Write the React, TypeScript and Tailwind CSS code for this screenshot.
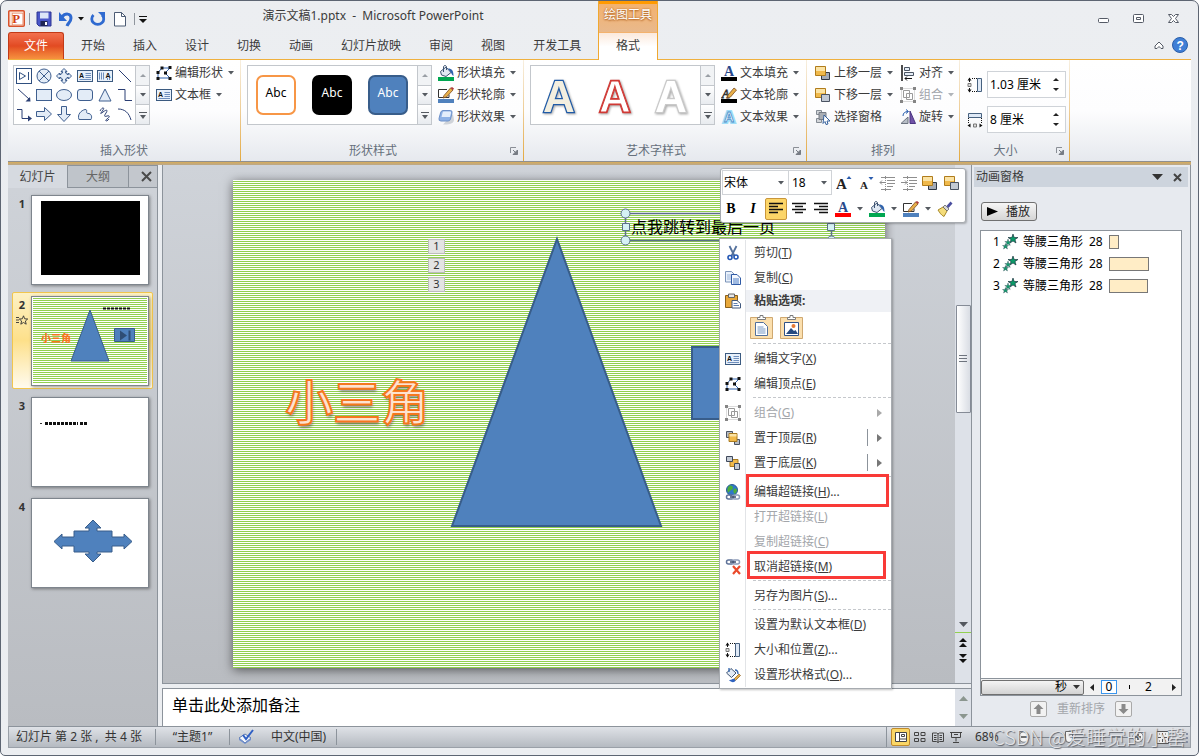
import type { ReactNode } from 'react'
import clsx from 'clsx'

type SvgProps = { children: ReactNode; size?: number }

const Icon = ({ children, size = 16 }: SvgProps) => (
  <svg width={size} height={size} viewBox="0 0 16 16" fill="none" className="shrink-0" aria-hidden="true">
    {children}
  </svg>
)

const Caret = ({ color = '#555a60' }: { color?: string }) => (
  <svg width="6" height="4" viewBox="0 0 6 4" className="shrink-0" aria-hidden="true">
    <path d="M0 0h6L3 3.5z" fill={color} />
  </svg>
)

const EditPoints = () => (
  <Icon>
    <path d="M2 13V7.5L6 3h8l-5 5 5 5z" stroke="#2f62b0" />
    <path d="M4.500 1.500h3v3h-3zM12.500 1h3v3h-3zM.5 6h3v3h-3zM.5 12h3v3h-3zM12.500 12h3v3h-3zM8 6.500h3v3H8z" fill="#111" />
  </Icon>
)

const TextBox = () => (
  <Icon>
    <rect x=".5" y="2.500" width="15" height="11" fill="#e8f0fa" stroke="#3b5a80" />
    <text x="2" y="9.500" fontSize="7" fontWeight="700" fill="#111" fontFamily="Liberation Sans">A</text>
    <path d="M8.500 5.500h5.500M8.500 7.500h5.500M8.500 9.500h5.500M2.500 11.500H14" stroke="#6f8fbd" />
  </Icon>
)

const VerticalTextBox = () => (
  <Icon>
    <rect x=".5" y="2.500" width="15" height="11" fill="#e8f0fa" stroke="#3b5a80" />
    <text x="8.500" y="9.500" fontSize="7" fontWeight="700" fill="#111" fontFamily="Liberation Sans">A</text>
    <path d="M2.500 4.500v7M4.500 4.500v7M6.500 4.500v7M10.500 10v2M12.500 10v2" stroke="#6f8fbd" />
  </Icon>
)

const Bucket = ({ bar = '#00a651' }: { bar?: string }) => (
  <Icon>
    <path d="M2.500 6.500L8 2l5 5.500-5 4-4.500-1.500z" fill="#dfe8f3" stroke="#3d5372" />
    <path d="M5.500 7V1.500C6 .3 8 .3 8.500 1.500V5" stroke="#3d5372" />
    <path d="M10 3.500c4 0 5.500 2 5.500 7.500-1.500-1-2-2.500-3-4z" fill="#2f63ad" />
    <path d="M0 12h16v4H0z" fill={bar} />
  </Icon>
)

const PenOutline = ({ bar = '#4f81bd' }: { bar?: string }) => (
  <Icon>
    <path d="M9 2.500H.5v8H11v-3" fill="#fff" stroke="#333" />
    <path d="M6 8.500L12.500 1l2.500 2-6.500 7L5 11z" fill="#e8b04a" stroke="#7b4d22" strokeWidth=".8" />
    <path d="M12.500 1L14 0l2 1.500L15 3z" fill="#b33a3a" />
    <path d="M0 12h16v4H0z" fill={bar} />
  </Icon>
)

const Effects = () => (
  <Icon>
    <path d="M5 15.500c5 .5 10.500-.5 11-4.500L15 5z" fill="#cfd3d9" />
    <path d="M5 1.500h7.500Q14.500 1.500 14 4l-1.500 6q-.5 2-2.500 2H3Q.5 12 1 9.500L2.500 4Q3 1.500 5 1.500z" fill="#8db1e6" stroke="#6d90c8" />
    <path d="M5.500 2.500H12q1.500 0 1 1.500l-1 4H3.500l1-4q.2-1.500 1-1.500z" fill="#e3edfb" />
  </Icon>
)

const LetterA = ({ bar }: { bar: string }) => (
  <Icon>
    <text x="3" y="11" fontSize="14" fontWeight="700" fill="#28498c" fontFamily="Liberation Serif">A</text>
    <path d="M0 12h16v4H0z" fill={bar} />
  </Icon>
)

const LetterOutline = () => (
  <Icon>
    <text x="1" y="11" fontSize="12" fontStyle="italic" fill="#fff" stroke="#333" strokeWidth=".8" fontFamily="Liberation Serif">A</text>
    <path d="M7 8l6-7 2.500 2L9.500 10 6.500 11z" fill="#e8b04a" stroke="#7b4d22" strokeWidth=".8" />
    <path d="M0 12h16v4H0z" fill="#000" />
  </Icon>
)

const LetterGlow = () => (
  <Icon>
    <text x="3" y="13" fontSize="14" fontWeight="700" fill="#fff" stroke="#9fdcf7" strokeWidth="4" paintOrder="stroke" fontFamily="Liberation Sans">A</text>
    <text x="3" y="13" fontSize="14" fontWeight="700" fill="#eef7ff" stroke="#4a8cc8" strokeWidth=".8" fontFamily="Liberation Sans">A</text>
  </Icon>
)

const BringForward = () => (
  <Icon>
    <path d="M6.500 7.500h8v7h-8z" fill="#a4abb6" stroke="#2f3743" />
    <path d="M.5 1.500h10v9H.5z" fill="#f0b94b" stroke="#b07c1c" />
    <path d="M1 2h9v4H1z" fill="#fbe3a4" />
  </Icon>
)

const SendBackward = () => (
  <Icon>
    <path d="M.5 1.500h10v9H.5z" fill="#f0b94b" stroke="#b07c1c" />
    <path d="M1 2h9v4H1z" fill="#fbe3a4" />
    <path d="M6.500 7.500h8v7h-8z" fill="#c3cad4" stroke="#4a5362" />
  </Icon>
)

const ToFront = () => (
  <Icon>
    <path d="M1.500 1.500h6v6h-6zM9.500 9.500h5v5h-5z" fill="#b6bcc5" stroke="#4a5362" />
    <path d="M4 3.500h8v8H4z" fill="#f0b94b" stroke="#a87a20" />
    <path d="M4.500 4h7v2.500h-7z" fill="#fbe3a4" />
  </Icon>
)

const ToBack = () => (
  <Icon>
    <path d="M5 4.500h8v7H5z" fill="#f0b94b" stroke="#a87a20" />
    <path d="M1.500 1.500h6v5h-6zM9.500 8.500h5v6h-5z" fill="#c3cad4" stroke="#3f495a" />
  </Icon>
)

const SelectionPane = () => (
  <Icon>
    <path d="M1.500 1.500h5v4h-5zM1.500 9.500h5v4h-5z" fill="#d3d6da" stroke="#858c95" />
    <path d="M4 3.500h7v7H4z" fill="#a9adb3" stroke="#777d86" />
    <path d="M9 6l6 6h-3l1 3-2 .500-1-3-2 2z" fill="#fff" stroke="#35609c" />
  </Icon>
)

const Align = () => (
  <Icon>
    <path d="M2 0v16" stroke="#111" strokeWidth="1.500" />
    <path d="M4.500 2.500h5v3h-5zM4.500 7.500h9v3h-9z" fill="#e4ecf6" stroke="#4b5563" />
    <path d="M12 13.500H5M7 11.500l-2 2 2 2" stroke="#111" />
  </Icon>
)

const GroupIcon = () => (
  <Icon>
    <path d="M1.500 1.500h13v13h-13z" stroke="#b9b9b9" strokeDasharray="1 1" />
    <path d="M3.500 3.500h6v7h-6zM6.500 6.500h6v6h-6z" stroke="#9a9a9a" />
    <path d="M0 0h3v3H0zM13 0h3v3h-3zM0 13h3v3H0zM13 13h3v3h-3z" fill="#858585" />
  </Icon>
)

const Rotate = () => (
  <Icon>
    <path d="M1 14.500L8 8v6.500z" fill="#b7bdc6" stroke="#6c7480" />
    <path d="M10 14.500V2l5.500 12.500z" fill="#7153a8" stroke="#4a3580" />
    <path d="M3 7c0-3 2-4.500 5-4.500M6 .5l2.500 2L6 4.500" stroke="#2a5fae" />
  </Icon>
)

const HeightIcon = () => (
  <Icon>
    <path d="M10.500 1.500h4v13h-4z" fill="#dfe9f6" stroke="#47617f" />
    <path d="M2.500 1v4M2.500 11v4" stroke="#111" />
    <path d="M.5 3.500l2-3 2 3zM.5 12.500l2 3 2-3z" fill="#111" />
    <path d="M5 1.500h5M5 14.500h5" stroke="#111" strokeDasharray="1 1" />
    <path d="M1 6.500h3v3H1z" fill="#ddd" stroke="#777" />
  </Icon>
)

const WidthIcon = () => (
  <Icon>
    <path d="M1.500 1.500h13v4h-13z" fill="#dfe9f6" stroke="#47617f" />
    <path d="M.5 13.500l3-2v4zM15.500 13.500l-3-2v4z" fill="#111" />
    <path d="M1.500 6v5M14.500 6v5" stroke="#111" strokeDasharray="1 1" />
    <path d="M6.500 12h3v3h-3z" fill="#ddd" stroke="#777" />
  </Icon>
)

const Cut = () => (
  <Icon>
    <path d="M4.500 1L9.500 11M11.500 1L6.500 11" stroke="#54719c" strokeWidth="1.800" />
    <circle cx="5" cy="12.500" r="2" stroke="#2458b5" strokeWidth="1.600" />
    <circle cx="11" cy="12" r="2" stroke="#2458b5" strokeWidth="1.600" />
  </Icon>
)

const Copy = () => (
  <Icon>
    <path d="M.5 1.500h6l2.500 2.500v8H.5z" fill="#e9f1fb" stroke="#7b93b8" />
    <path d="M2 5h5M2 7h5M2 9h5" stroke="#9db5d8" />
    <path d="M6.500 4.500h5.500L15.500 8v6.500h-9z" fill="#f4f8fe" stroke="#2f5aa5" />
    <path d="M8 9h6M8 11h6M8 13h6" stroke="#4d7cc4" />
  </Icon>
)

const Paste = () => (
  <Icon>
    <path d="M.5 2.500h12v12H.5z" fill="#e8a83a" stroke="#8a5f1a" />
    <path d="M3.500 1h6v3.500h-6z" fill="#e7e7e7" stroke="#666" />
    <path d="M7 7.500h5l3.500 3v4.500H7z" fill="#fff" stroke="#41597e" />
    <path d="M8.500 10.500h4M8.500 12.500h5.500" stroke="#5b7db0" />
  </Icon>
)

const Chain = ({ y = 0 }: { y?: number }) => (
  <g transform={`translate(0 ${y})`} strokeWidth="1.500">
    <rect x="1.500" y="3" width="7" height="4" rx="2" stroke="#5f7399" />
    <rect x="7.500" y="3" width="7" height="4" rx="2" stroke="#8c9bb8" />
    <path d="M5 5h6" stroke="#3d4d6d" />
  </g>
)

const GlobeLink = () => (
  <Icon>
    <circle cx="7" cy="6" r="5.500" fill="#2f78c9" stroke="#2a5c94" />
    <path d="M4 2c2-1 4 0 4 2S5 6 4 8 1 5 4 2zM9 5c2-1 3 0 3 2l-2 3C8 9 8 6 9 5z" fill="#4cae3c" />
    <Chain y={8} />
  </Icon>
)

const RemoveLink = () => (
  <Icon>
    <Chain y={-2} />
    <path d="M8 7l7 8M15 7l-7 8" stroke="#ea4a2b" strokeWidth="2.200" />
  </Icon>
)

const FormatShape = () => (
  <Icon>
    <path d="M1.500 6L6 1.500l5 4.500-4.500 4.500z" fill="#e2eaf4" stroke="#3d5372" />
    <path d="M4 5V1M10 3c2 0 3 1 3 4" stroke="#2f63ad" strokeWidth="1.300" />
    <path d="M9 12l5-5 1.500 1.500-5 5z" fill="#e6ae48" stroke="#8b5d20" strokeWidth=".7" />
    <path d="M4 13c3 .500 3-2 5.500-1l1 1.500C9.500 16 6 15.500 4 13z" fill="#2f63c0" />
  </Icon>
)

const PasteBlock = ({ picture }: { picture?: boolean }) => (
  <svg width="23" height="24" viewBox="0 0 23 24" fill="none" aria-hidden="true">
    <path d="M.5 2.500h22v21H.5z" fill="#fbdfae" stroke="#cfa870" />
    <path d="M7.500 4.500v-2h2.500V.5h3v2h2.500v2z" fill="#fff" stroke="#7c7c7c" />
    {picture ? (
      <>
        <path d="M4.500 7.500h14v13h-14z" fill="#fff" stroke="#2f5288" />
        <path d="M6 19l5-6 3 3 1.500-1 2.500 4z" fill="#264a80" />
        <circle cx="13.500" cy="11" r="2" fill="#e57a35" />
      </>
    ) : (
      <>
        <path d="M5.500 7.500h8l4 4v9h-12z" fill="#fff" stroke="#52709c" />
        <path d="M7.500 12h6M7.500 14h8M7.500 16h8M7.500 18h8" stroke="#7797c2" />
      </>
    )}
  </svg>
)

const Lines = ({ align }: { align: 'left' | 'center' | 'right' }) => {
  const d = {
    left: 'M1 2.500h14M1 5.500h9M1 8.500h14M1 11.500h9',
    center: 'M1 2.500h14M4 5.500h8M1 8.500h14M4 11.500h8',
    right: 'M1 2.500h14M6 5.500h9M1 8.500h14M6 11.500h9',
  }
  return (
    <Icon>
      <path d={d[align]} stroke="#111" strokeWidth="1.300" />
    </Icon>
  )
}

const Indent = ({ right }: { right?: boolean }) => (
  <Icon>
    <path d="M2 2.500h14M8 5.500h8M8 8.500h8M8 11.500h6M2 14.500h10" stroke="#8f8f8f" />
    <path d={right ? 'M0 7.500h6M4 5.500l2 2-2 2' : 'M7 7.500H1M3 5.500l-2 2 2 2'} stroke="#8c8c8c" />
    <path d="M6.500 1v15" stroke="#8f8f8f" strokeDasharray="1 1" />
  </Icon>
)

const s = { stroke: '#3f5f8f', fill: '#e3ecf7' }
const galleryShapes: [string, ReactNode][] = [
  ['动作按钮', <><rect x=".5" y=".5" width="15" height="15" fill="#fff" stroke="#2f4f7f" /><path d="M3.500 4.500v7l6-3.500zM12.500 4v8" stroke="#2f4f7f" /></>],
  ['汇总连接', <><circle cx="8" cy="8" r="7" {...s} /><path d="M3 3l10 10M13 3L3 13" stroke="#3f5f8f" /></>],
  ['十字箭头标注', <path d="M8 .5l3 3H9.500V5H11v1.500h1.500V5l3 3-3 3V9.500H11V11H9.500v1.500H11l-3 3-3-3h1.500V11H5V9.500H3.500V11l-3-3 3-3v1.500H5V5h1.500V3.500H5z" {...s} />],
  ['文本框', null],
  ['垂直文本框', null],
  ['直线', <path d="M2 2l12 12" stroke="#2b3f74" />],
  ['箭头', <><path d="M2 2l11 10" stroke="#2b3f74" /><path d="M14.500 14.500h-5l4.500-4.500z" fill="#2b3f74" /></>],
  ['矩形', <rect x=".5" y="2.500" width="15" height="11" {...s} />],
  ['椭圆', <ellipse cx="8" cy="8" rx="7.500" ry="5.500" {...s} />],
  ['圆角矩形', <rect x=".5" y="2.500" width="15" height="11" rx="2.500" {...s} />],
  ['等腰三角形', <path d="M8 2l6 12H2z" {...s} />],
  ['肘形连接符', <path d="M1 2.500h7v11h7" stroke="#2b3f74" />],
  ['肘形箭头', <><path d="M1 3.500h5v9h8" stroke="#2b3f74" /><path d="M12 9.500l4 3-4 3z" fill="#2b3f74" /></>],
  ['右箭头', <path d="M.5 5.500h8v-4L15.500 8l-7 6.500v-4h-8z" {...s} />],
  ['下箭头', <path d="M5.500 .5h5v8h4L8 15.500 1.500 8.500h4z" {...s} />],
  ['任意多边形', <path d="M2 13.500c-2-5 2-9 6-10 4 0-1 4 4 4 3 1 3 4 2 6z" {...s} />],
  ['自由曲线', <path d="M3 5c2-4 5-4 3-1S2 9 6 6s5-2 3 1-2 4 1 3 3 1 0 3 0 3 2 0" stroke="#2b3f74" />],
  ['弧形', <path d="M1 3c7 0 11 4 13 11" stroke="#2b3f74" />],
]

const GalleryScroll = ({ name }: { name: string }) => (
  <div className="flex w-[14px] shrink-0 flex-col divide-y divide-[#c3c7cc] border-l border-[#c3c7cc]">
    <button aria-label={`${name} 向上`} className="flex flex-1 items-center justify-center bg-[#f1f3f5]">
      <svg width="6" height="3"><path d="M0 3h6L3 0z" fill="#9a9fa5" /></svg>
    </button>
    <button aria-label={`${name} 向下`} className="flex flex-1 items-center justify-center bg-linear-to-b from-white to-[#e8ebef]">
      <Caret />
    </button>
    <button aria-label={`${name} 更多`} className="flex flex-1 items-center justify-center bg-linear-to-b from-white to-[#e8ebef]">
      <svg width="8" height="8"><path d="M0 1.500h8" stroke="#555a60" /><path d="M1 4h6L4 8z" fill="#555a60" /></svg>
    </button>
  </div>
)

type RibbonButtonProps = { icon: ReactNode; label: string; caret?: boolean; disabled?: boolean }

const RibbonButton = ({ icon, label, caret = true, disabled }: RibbonButtonProps) => (
  <button disabled={disabled} className={clsx('flex h-[22px] items-center gap-[3px]', disabled ? 'text-[#a0a4aa]' : 'text-[#3b3b3b]')}>
    {icon}
    <span className="mr-[2px] whitespace-nowrap">{label}</span>
    {caret && <Caret color={disabled ? '#b0b4b9' : undefined} />}
  </button>
)

type RibbonGroupProps = { label: string; width: string; launcher?: boolean; children: ReactNode }

const RibbonGroup = ({ label, width, launcher, children }: RibbonGroupProps) => (
  <section aria-label={label} className={clsx('flex shrink-0', width)}>
    <div className="flex min-w-0 flex-1 flex-col">
      <div className="flex flex-1 items-start pl-[5px] pt-[2px]">{children}</div>
      <div className="flex h-[20px] items-center text-[#66707c]">
        <span className="flex-1 text-center">{label}</span>
        {launcher && (
          <button aria-label={`${label}选项`} className="flex w-[18px] justify-center">
            <svg width="8" height="8" fill="none"><path d="M.5 6V.5H6" stroke="#8a8f96" /><path d="M3 3l3 3M7.500 3v4.500H3z" stroke="#777c84" fill="#777c84" /></svg>
          </button>
        )}
      </div>
    </div>
    <div className="w-px bg-linear-to-b from-[#f7efe0] to-[#e3a93c]" />
  </section>
)

const InsertGallery = () => (
  <div className="mr-[6px] mt-[3px] flex h-[60px] border border-[#c3c7cc] bg-white">
    <div className="grid w-[121px] grid-cols-6 justify-items-center">
      {galleryShapes.map(([name, shape]) => (
        <button key={name} aria-label={name} className="flex items-center">
          {name === '文本框' ? <TextBox /> : name === '垂直文本框' ? <VerticalTextBox /> : <Icon>{shape}</Icon>}
        </button>
      ))}
    </div>
    <GalleryScroll name="形状" />
  </div>
)

const wordArt = [
  { fill: '#f3efe0', stroke: '#1f5aa6', inner: '#f3efe0' },
  { fill: '#fff', stroke: '#d03a36', inner: '#d03a36' },
  { fill: '#fff', stroke: '#c9c9c9', inner: '#fff' },
]

const WordArtLetter = ({ fill, stroke, inner }: (typeof wordArt)[number]) => (
  <svg width="40" height="54" viewBox="0 0 40 54" className="drop-shadow-[1px_1px_1px_rgba(0,0,0,0.35)]" aria-hidden="true">
    <text x="20" y="44" textAnchor="middle" fontSize="44" fontWeight="700" fontFamily="Liberation Sans" fill={fill} stroke={stroke} strokeWidth="2.500" paintOrder="stroke">A</text>
    {inner !== fill && (
      <text x="20" y="44" textAnchor="middle" fontSize="44" fontWeight="700" fontFamily="Liberation Sans" fill="none" stroke={inner} strokeWidth="1">A</text>
    )}
  </svg>
)

const SizeField = ({ id, label, icon, value }: { id: string; label: string; icon: ReactNode; value: string }) => (
  <div className="flex items-center gap-1">
    <label htmlFor={id} aria-label={label}>{icon}</label>
    <div className="flex h-[27px] w-[79px] items-center border border-[#cfd3d8] bg-white pr-1">
      <input id={id} defaultValue={value} className="w-0 flex-1 bg-transparent px-[2px] text-black outline-none" />
      <div className="flex flex-col gap-[7px] px-[2px]">
        <button aria-label={`增加${label}`}><svg width="6" height="3" className="block"><path d="M0 3h6L3 0z" fill="#222" /></svg></button>
        <button aria-label={`减少${label}`}><svg width="6" height="3" className="block"><path d="M0 0h6L3 3z" fill="#222" /></svg></button>
      </div>
    </div>
  </div>
)

const QuickAccess = () => (
  <div className="flex w-[140px] items-center pt-1">
    <button aria-label="PowerPoint">
      <Icon size={17}>
        <rect x=".7" y=".7" width="14.600" height="14.600" rx="1" fill="#fbe3d6" stroke="#d9532c" strokeWidth="1.400" />
        <rect x="4" y="3" width="10" height="11" fill="#fff" stroke="#e88a68" strokeWidth=".7" />
        <text x="4" y="12.500" fontSize="12" fontWeight="700" fill="#cf3f16" fontFamily="Liberation Serif">P</text>
      </Icon>
    </button>
    <span className="ml-1 h-3 w-px shrink-0 bg-[#8f959d]" />
    <button aria-label="保存" className="ml-1.5">
      <Icon>
        <path d="M1 1h14v14H3l-2-2z" fill="#4a57c9" stroke="#2c3592" />
        <path d="M4 1.500h8.500v6H4z" fill="#dce6f8" />
        <path d="M4.500 10h7v5h-7z" fill="#1e2555" /><path d="M9 11h2v3H9z" fill="#fff" />
      </Icon>
    </button>
    <button aria-label="撤消" className="ml-1.5">
      <Icon><path d="M4 6c3-4 9-4 9 1 0 4-3 5-4 8" stroke="#2f6ad0" strokeWidth="3" /><path d="M1 1v9h8z" fill="#2f6ad0" /></Icon>
    </button>
    <button aria-label="撤消选项" className="ml-1"><Caret color="#111" /></button>
    <button aria-label="恢复" className="ml-1.5">
      <Icon><path d="M3.500 4a6 5.500 0 1 0 8.500 0" stroke="#2f6ad0" strokeWidth="2.800" /><path d="M8 1h7v7z" fill="#2f6ad0" /></Icon>
    </button>
    <button aria-label="新建" className="ml-1.5">
      <Icon><path d="M2.500 1.500h7l4 4v9.500h-11z" fill="#fff" stroke="#4d5c75" /><path d="M9.500 1.500v4h4" stroke="#4d5c75" /></Icon>
    </button>
    <span className="ml-1.5 h-3 w-px shrink-0 bg-[#8f959d]" />
    <button aria-label="自定义快速访问工具栏" className="ml-1">
      <svg width="8" height="8"><path d="M0 1.500h8" stroke="#111" /><path d="M0 4h8L4 8z" fill="#111" /></svg>
    </button>
  </div>
)

const tabs = ['开始', '插入', '设计', '切换', '动画', '幻灯片放映', '审阅', '视图', '开发工具']

const Header = () => (
  <header className="flex h-[59px] shrink-0">
    <div className="flex w-[590px] flex-col border-b border-[#efb03e]">
      <div className="flex h-[31px]">
        <QuickAccess />
        <h1 className="flex-1 pt-[6px] text-center text-[12px] leading-[18px] text-[#3b3b3b]">演示文稿1.pptx&nbsp; - &nbsp;Microsoft PowerPoint</h1>
      </div>
      <nav className="flex flex-1 items-stretch text-[#3b3b3b]">
        <button className="mr-[3px] w-[56px] rounded-t-[3px] border border-b-0 border-[#c23a17] bg-linear-to-b from-[#f2704d] via-[#e24a22] to-[#f6913f] text-white">文件</button>
        {tabs.map(tab => <button key={tab} className="px-[14px]">{tab}</button>)}
      </nav>
    </div>
    <div className="flex w-[60px] flex-col border-x border-[#f0a830]">
      <div className="flex h-[31px] justify-center border-t-[3px] border-[#ff9a00] bg-linear-to-b from-[#f3b26e] to-[#e9b98c] pt-[2px] leading-[18px] text-white [text-shadow:0_0_2px_#b0601c,0_1px_2px_#b0601c]">绘图工具</div>
      <button className="flex-1 border-t border-[#f3b26e] bg-linear-to-b from-[#fbe9dc] via-white to-white pb-px text-[#3b3b3b]">格式</button>
    </div>
    <div className="flex flex-1 flex-col items-end border-b border-[#efb03e]">
      <div className="flex gap-[23px] pr-[11px] pt-[10px]">
        <button aria-label="最小化"><svg width="12" height="14" fill="none"><rect x=".5" y="7.500" width="10" height="4" rx="1" fill="#fff" stroke="#555b66" /></svg></button>
        <button aria-label="还原"><svg width="12" height="14" fill="none"><rect x=".5" y="3.500" width="10" height="8" rx="1" fill="#fff" stroke="#555b66" /><path d="M3.500 6.500h4v2h-4z" stroke="#555b66" /></svg></button>
        <button aria-label="关闭"><svg width="12" height="14" fill="none"><path d="M.5 3.500h3l2 2 2-2h3L7.500 7.500l3 4h-3l-2-2-2 2h-3l3-4z" fill="#fff" stroke="#555b66" /></svg></button>
      </div>
      <div className="flex items-center gap-2 pr-[3px] pt-3">
        <button aria-label="功能区最小化"><svg width="10" height="9" fill="none"><path d="M1 5l4-4 4 4v2.500H7L5 5.500 3 7.500H1z" fill="#fff" stroke="#555b66" /></svg></button>
        <button aria-label="帮助">
          <Icon><circle cx="8" cy="8" r="7.500" fill="#3f7fd6" stroke="#2a5ea8" /><text x="4.500" y="12.500" fontSize="12" fontWeight="700" fill="#fff" fontFamily="Liberation Sans">?</text></Icon>
        </button>
      </div>
    </div>
  </header>
)

const Ribbon = () => (
  <div className="flex h-[101px] shrink-0 bg-linear-to-b from-white via-[#fdfdfe] to-[#e6e9ee]">
    <RibbonGroup label="插入形状" width="w-[233px]">
      <InsertGallery />
      <div className="flex flex-col">
        <RibbonButton icon={<EditPoints />} label="编辑形状" />
        <RibbonButton icon={<TextBox />} label="文本框" />
      </div>
    </RibbonGroup>
    <RibbonGroup label="形状样式" width="w-[283px]" launcher>
      <div className="ml-px mr-[6px] mt-[3px] flex h-[60px] w-[185px] border border-[#c3c7cc] bg-white">
        <div className="flex flex-1 items-center gap-4 pl-[8px] leading-4">
          <button className="h-10 w-10 rounded-[7px] border-2 border-[#f79646] bg-white pb-1 text-black">Abc</button>
          <button className="h-10 w-10 rounded-[7px] bg-black pb-1 text-white">Abc</button>
          <button className="h-10 w-10 rounded-[7px] border-2 border-[#385d8a] bg-[#4f81bd] pb-1 text-white">Abc</button>
        </div>
        <GalleryScroll name="形状样式" />
      </div>
      <div className="flex flex-col">
        <RibbonButton icon={<Bucket />} label="形状填充" />
        <RibbonButton icon={<PenOutline />} label="形状轮廓" />
        <RibbonButton icon={<Effects />} label="形状效果" />
      </div>
    </RibbonGroup>
    <RibbonGroup label="艺术字样式" width="w-[283px]" launcher>
      <div className="ml-px mr-[6px] mt-[3px] flex h-[60px] w-[185px] border border-[#c3c7cc] bg-white">
        <div className="flex flex-1 items-center gap-4 pl-[8px]">
          {wordArt.map(style => (
            <button key={style.stroke} aria-label="艺术字"><WordArtLetter {...style} /></button>
          ))}
        </div>
        <GalleryScroll name="艺术字样式" />
      </div>
      <div className="flex flex-col">
        <RibbonButton icon={<LetterA bar="#000" />} label="文本填充" />
        <RibbonButton icon={<LetterOutline />} label="文本轮廓" />
        <RibbonButton icon={<LetterGlow />} label="文本效果" />
      </div>
    </RibbonGroup>
    <RibbonGroup label="排列" width="w-[153px]">
      <div className="ml-[3px] mr-[7px] flex flex-col">
        <RibbonButton icon={<BringForward />} label="上移一层" />
        <RibbonButton icon={<SendBackward />} label="下移一层" />
        <RibbonButton icon={<SelectionPane />} label="选择窗格" caret={false} />
      </div>
      <div className="flex flex-col">
        <RibbonButton icon={<Align />} label="对齐" />
        <RibbonButton icon={<GroupIcon />} label="组合" disabled />
        <RibbonButton icon={<Rotate />} label="旋转" />
      </div>
    </RibbonGroup>
    <RibbonGroup label="大小" width="w-[110px]" launcher>
      <div className="flex flex-col gap-2 pl-[2px] pt-[9px]">
        <SizeField id="shape-height" label="高度" icon={<HeightIcon />} value="1.03 厘米" />
        <SizeField id="shape-width" label="宽度" icon={<WidthIcon />} value="8 厘米" />
      </div>
    </RibbonGroup>
  </div>
)

const thumbs: ReactNode[] = [
  <svg viewBox="0 0 116 88" className="block size-full bg-white"><path d="M9 5h99v74H9z" fill="#000" /></svg>,
  <div className="size-full border border-white bg-[repeating-linear-gradient(to_bottom,#92d050_0,#92d050_1px,#fff_1px,#fff_2px)]">
    <svg viewBox="0 0 114 86" className="block size-full">
      <path d="M57 12l19 51H38z" fill="#4f81bd" stroke="#385d8a" />
      <path d="M81.500 30.500h20v13h-20z" fill="#4f81bd" stroke="#385d8a" />
      <path d="M87 32.500v10l7-5zM95.500 32.500h2v10h-2z" fill="#2f4d74" />
      <path d="M70 10.500h27" stroke="#111" strokeWidth="2" strokeDasharray="3 1" />
      <text x="8" y="44" fontSize="10" fontWeight="900" fill="#f5781e" fontFamily="Noto Sans CJK SC">小三角</text>
    </svg>
  </div>,
  <svg viewBox="0 0 116 88" className="block size-full bg-white">
    <path d="M8 25.500h2" stroke="#333" />
    <path d="M13 25.500h33M48 25.500h7" stroke="#111" strokeWidth="3" strokeDasharray="3 1" />
  </svg>,
  <svg viewBox="0 0 116 88" className="block size-full bg-white">
    <path d="M61 21l8 8h-4v3h15v6h12v-3l8 7.500-8 7.500v-3H80v6H65v2h4l-8 8-8-8h4v-2H42v-6H30v3l-8-7.500 8-7.500v3h12v-6h15v-3h-4z" fill="#4f81bd" stroke="#385d8a" />
  </svg>,
]

const SlidePanel = () => (
  <aside className="flex w-[150px] shrink-0 flex-col border-r border-[#8c939b] bg-linear-to-b from-[#cfd3d9] to-[#b9bcc1]">
    <div className="flex h-[23px] text-[#444]">
      <button className="w-[59px] bg-[#d6dae0]">幻灯片</button>
      <button className="w-[61px] border border-r-0 border-[#8c939b] bg-[#bfc4ca] text-[#666]">大纲</button>
      <button aria-label="关闭窗格" className="flex flex-1 items-center justify-center border border-r-0 border-[#8c939b] bg-[#c3c7cd] pl-[6px]">
        <svg width="11" height="11"><path d="M1 1l9 9M10 1l-9 9" stroke="#4a4a4a" strokeWidth="2" /></svg>
      </button>
    </div>
    <ol className="flex flex-col gap-1 px-[4px] pt-[3px]">
      {thumbs.map((thumb, i) => (
        <li
          key={i}
          className={clsx(
            'flex h-[97px] rounded-[2px] border py-[3px] pl-px',
            i === 1 ? 'border-[#f2c64d] bg-linear-to-b from-[#fdf1c4] via-[#fde08a] to-[#fffbee]' : 'border-transparent',
          )}
        >
          <div className="flex w-[17px] flex-col items-center gap-1 pr-px pt-[3px] text-[11px] leading-3 text-[#333]">
            <b>{i + 1}</b>
            {i === 1 && (
              <svg width="12" height="11" fill="none"><path d="M7.500 .8l1.200 3 3 .200-2.300 2 .800 3.200-2.700-1.700L4.800 9.200l.800-3.200-2.300-2 3-.200zM0 2.500h3M0 5h3M0 7.500h3" stroke="#333" strokeWidth=".9" /></svg>
            )}
          </div>
          <div className="h-[90px] w-[118px] border border-[#7e858d] shadow-[1px_1px_3px_rgba(0,0,0,0.4)]">{thumb}</div>
        </li>
      ))}
    </ol>
  </aside>
)

const Slide = () => (
  <div className="relative size-full bg-[repeating-linear-gradient(to_bottom,#fff_0,#fff_1px,#92d050_1px,#92d050_2px)] shadow-[0_2px_10px_rgba(0,0,0,0.55)]">
    <svg width="640" height="360" fill="none" className="absolute left-0 top-0" aria-hidden="true">
      <path d="M324 59l104 287H219z" fill="#4f81bd" stroke="#385d8a" strokeWidth="2" />
      <path d="M459 167h100v72H459z" fill="#4f81bd" stroke="#385d8a" strokeWidth="2" />
      <path d="M392.500 33.500h206v27h-206z" stroke="#5b7089" strokeWidth="1.500" />
      <g fill="#d5f1f4" stroke="#5b7089">
        <circle cx="392.500" cy="33.500" r="4.500" />
        <circle cx="392.500" cy="60.500" r="4.500" />
        <circle cx="598.500" cy="60.500" r="4.500" />
        <path d="M389.500 43.500h7v7h-7zM594.500 43.500h7v7h-7z" />
      </g>
    </svg>
    <p className="absolute left-[398px] top-[35px] whitespace-nowrap text-[16px] leading-6 text-black">点我跳转到最后一页</p>
    <p className="absolute left-[52px] top-[187px] whitespace-nowrap font-['Noto_Sans_CJK_SC',sans-serif] text-[48px] leading-[64px] font-medium text-[#fde3d0] [-webkit-text-stroke:2px_#f5781e] [text-shadow:1px_3px_3px_rgba(80,80,80,0.6)]">小三角</p>
    <ol className="absolute left-[195px] top-[59px] flex flex-col gap-1 text-[11px] leading-[12px] text-[#333]">
      {[1, 2, 3].map(n => (
        <li key={n} className="h-[15px] w-[17px] border border-[#bdbdbd] bg-[#e4e4e4] text-center">{n}</li>
      ))}
    </ol>
  </div>
)

const Workspace = () => (
  <main className="ml-[4px] flex min-w-0 flex-1 flex-col">
    <div className="flex min-h-0 flex-1 border-b border-l border-[#8c939b]">
      <div className="flex-1 bg-linear-to-b from-[#cfd3d9] to-[#b9bcc1] px-[70px] py-[15px]">
        <Slide />
      </div>
      <div className="flex w-[16px] flex-col items-center bg-[#dde1e8]">
        <div className="flex-1" />
        <div className="flex h-[108px] w-[15px] items-center justify-center rounded-[1px] border border-[#858b96] bg-linear-to-r from-white to-[#d9dde4]">
          <svg width="8" height="8"><path d="M0 .5h8M0 3.500h8M0 6.500h8" stroke="#6e747e" /></svg>
        </div>
        <div className="h-[209px]" />
        <button aria-label="向下滚动"><svg width="9" height="5" className="block"><path d="M0 0h9L4.500 5z" fill="#54585f" /></svg></button>
        <div className="mt-[5px] h-px w-full shrink-0 bg-[#92d050]" />
        <button aria-label="上一张幻灯片" className="mt-[5px]"><svg width="8" height="10" className="block"><path d="M0 4h8L4 0zM0 9h8L4 5z" fill="#111" /></svg></button>
        <button aria-label="下一张幻灯片" className="mb-[19px] mt-[6px]"><svg width="8" height="10" className="block"><path d="M0 0h8L4 4zM0 5h8L4 9z" fill="#111" /></svg></button>
      </div>
    </div>
    <div className="mt-[4px] flex h-[38px] border-l border-t border-[#8c939b] bg-white">
      <textarea aria-label="备注" defaultValue="单击此处添加备注" className="flex-1 resize-none overflow-hidden px-[9px] pt-[4px] text-[16px] leading-6 text-black outline-none" />
      <div className="flex w-[16px] flex-col items-center justify-between bg-[#dde1e8] py-[7px]">
        <svg width="9" height="5"><path d="M0 5h9L4.500 0z" fill="#8b968f" /></svg>
        <svg width="9" height="5"><path d="M0 0h9L4.500 5z" fill="#8b968f" /></svg>
      </div>
    </div>
  </main>
)

const effects = [
  { id: 1, bar: 10 },
  { id: 2, bar: 40 },
  { id: 3, bar: 39 },
]

const StarIcon = () => (
  <Icon>
    <path d="M11 0l1.200 3.500H16l-3 2 1 3.500-3-2-3 2 1-3.500-3-2h3.800z" fill="#0c9a68" stroke="#123" strokeWidth=".6" />
    <path d="M6 5l.800 2.500h2.600l-2 1.500.800 2.500L6 10l-2 1.500.800-2.500-2-1.500h2.400zM3.500 9.500l.700 2H6.500l-1.700 1.300.700 2.200-2-1.300-2 1.300.700-2.200L.5 11.500h2.300z" fill="#129a6c" stroke="#456" strokeWidth=".4" />
  </Icon>
)

const AnimationPane = () => (
  <aside className="flex w-[220px] shrink-0 flex-col border-x border-[#8c939b] bg-[#e7eaef] px-[2px] pt-[2px]">
    <div className="flex h-[20px] items-center bg-[#cdd4dd] px-[2px] text-[#3b3b3b]">
      <h2 className="flex-1 text-[12px]">动画窗格</h2>
      <button aria-label="窗格选项" className="mr-[10px]"><svg width="11" height="6" className="block"><path d="M0 0h11L5.500 6z" fill="#333" /></svg></button>
      <button aria-label="关闭动画窗格" className="mr-[4px]"><svg width="9" height="9" className="block"><path d="M1 1l7 7M8 1L1 8" stroke="#444" strokeWidth="2" /></svg></button>
    </div>
    <button className="ml-[7px] mt-[15px] flex h-[19px] w-[56px] items-center justify-between rounded-[3px] border border-[#707070] bg-linear-to-b from-[#f6f6f6] to-[#d5d5d5] pl-[5px] pr-[6px] text-[#222]">
      <svg width="11" height="9"><path d="M0 0l11 4.500L0 9z" fill="#000" /></svg>
      播放
    </button>
    <div className="ml-[6px] mr-[6px] mt-[9px] flex min-h-0 flex-1 flex-col border border-[#8c939b] bg-white">
      <ol className="flex-1 text-black">
        {effects.map(effect => (
          <li key={effect.id} className="flex h-[22px] items-center pl-[12px]">
            <span className="w-[9px]">{effect.id}</span>
            <StarIcon />
            <span className="ml-[5px] w-[66px]">等腰三角形</span>
            <span className="w-[20px]">28</span>
            <span className="h-[14px] border border-[#777] bg-[#ffedc6]" style={{ width: effect.bar }} />
          </li>
        ))}
      </ol>
      <div className="flex h-[17px] items-center border-t border-[#8c939b] bg-[#f2f2f2] text-black">
        <button className="flex h-[15px] w-[103px] items-center justify-end gap-[6px] rounded-[2px] border border-[#707070] bg-linear-to-b from-[#f4f4f4] to-[#d3d3d3] pr-[3px]">
          秒
          <svg width="7" height="4"><path d="M0 0h7L3.500 4z" fill="#333" /></svg>
        </button>
        <button aria-label="向左" className="ml-[6px]"><svg width="4" height="7" className="block"><path d="M4 0v7L0 3.500z" fill="#222" /></svg></button>
        <span className="ml-[7px] h-[14px] w-[16px] border border-[#3a96ee] bg-white text-center leading-[12px]">0</span>
        <span className="ml-[12px] h-[4px] w-px bg-black" />
        <span className="ml-[15px]">2</span>
        <button aria-label="向右" className="ml-auto mr-[5px]"><svg width="4" height="7" className="block"><path d="M0 0v7l4-3.500z" fill="#222" /></svg></button>
      </div>
    </div>
    <div className="flex h-[30px] items-center justify-center gap-[10px] pb-[5px] text-[#a3a6ab]">
      <button disabled aria-label="上移" className="flex h-[16px] w-[17px] items-center justify-center rounded-[2px] border border-[#a9a9a9] bg-[#f2f2f2]">
        <svg width="11" height="10"><path d="M5.500 0l5 5H7.500v5h-4V5H.5z" fill="#8a8a8a" /></svg>
      </button>
      重新排序
      <button disabled aria-label="下移" className="flex h-[16px] w-[17px] items-center justify-center rounded-[2px] border border-[#a9a9a9] bg-[#f2f2f2]">
        <svg width="11" height="10"><path d="M5.500 10l5-5H7.500V0h-4v5H.5z" fill="#8a8a8a" /></svg>
      </button>
    </div>
  </aside>
)

const StatusBar = () => (
  <footer className="flex h-[22px] shrink-0 items-center border border-t-[#8c939b] border-[#9aa0a8] bg-linear-to-b from-[#dfe2e7] to-[#b5bac1] text-[#333]">
    <span className="w-[147px] whitespace-pre border-r border-[#8c939b] pl-[7px]">幻灯片 第 2 张 ,  共 4 张</span>
    <span className="w-[74px] border-r border-[#8c939b] text-center">“主题1”</span>
    <div className="flex w-[107px] items-center gap-[17px] border-r border-[#8c939b] pl-[8px]">
      <Icon>
        <path d="M1 9l6-4 6 4-6 5z" fill="#f4f7fc" stroke="#5c79ae" /><path d="M1 9v2l6 4 6-4V9l-6 5z" fill="#6f8fd0" />
        <path d="M5 6l3 4 7-9" stroke="#2f5fc4" strokeWidth="2" />
      </Icon>
      <button>中文(中国)</button>
    </div>
    <div className="ml-auto flex items-center">
      <span className="mr-[4px] h-[20px] w-px bg-[#8c939b]" />
      <button aria-label="普通视图" className="flex h-[18px] w-[19px] items-center justify-center rounded-[2px] border border-[#c08a2c] bg-[#fbd766]">
        <svg width="12" height="10" fill="none"><path d="M.5 .5h11v9H.5z" fill="#fff" stroke="#444" /><path d="M4.500 .5v9M6.500 2.500h3v2h-3zM4.500 7h7" stroke="#444" /></svg>
      </button>
      <button aria-label="幻灯片浏览" className="ml-[4px]"><svg width="12" height="10" fill="none" className="block"><path d="M.5 .5h4v3h-4zM7 .5h4v3H7zM.5 6.500h4v3h-4zM7 6.500h4v3H7z" stroke="#444" /></svg></button>
      <button aria-label="阅读视图" className="ml-[6px]"><svg width="12" height="11" fill="none" className="block"><path d="M6 1.500v9M.5 1h4L6 2l1.500-1h4v8.500h-4L6 10.500 4.500 9.500h-4zM2 3.500h2.500M2 5.500h2.500M2 7.500h2.500M7.500 3.500H10M7.500 5.500H10M7.500 7.500H10" stroke="#444" /></svg></button>
      <button aria-label="幻灯片放映" className="ml-[6px]"><svg width="12" height="11" fill="none" className="block"><path d="M0 .5h12M1.500 .5v5h9v-5M6 5.500v4M3 10.500h6M4 2.500h4" stroke="#444" /></svg></button>
      <button className="ml-[13px] w-[43px] text-left">68%</button>
      <button aria-label="缩小"><Icon size={12}><circle cx="8" cy="8" r="7" fill="#f4f4f4" stroke="#666" /><path d="M4 8h8" stroke="#444" strokeWidth="2" /></Icon></button>
      <input
        type="range"
        aria-label="显示比例"
        min={10}
        max={400}
        defaultValue={150}
        className="mx-[3px] h-px w-[96px] appearance-none bg-[#7d838b] [&::-webkit-slider-thumb]:h-[12px] [&::-webkit-slider-thumb]:w-[8px] [&::-webkit-slider-thumb]:appearance-none [&::-webkit-slider-thumb]:rounded-b-[4px] [&::-webkit-slider-thumb]:border [&::-webkit-slider-thumb]:border-[#666] [&::-webkit-slider-thumb]:bg-[#f4f4f4]"
      />
      <button aria-label="放大"><Icon size={12}><circle cx="8" cy="8" r="7" fill="#f4f4f4" stroke="#666" /><path d="M4 8h8M8 4v8" stroke="#444" strokeWidth="2" /></Icon></button>
      <button aria-label="适应窗口" className="ml-[12px] mr-[8px]"><svg width="13" height="13" fill="none" className="block"><path d="M.5 .5h12v12H.5z" fill="#f1f1f1" stroke="#555" /><path d="M6.500 2v3M6.500 8v3M2 6.500h3M8 6.500h3M3 3h1M9 3h1M3 10h1M9 10h1" stroke="#555" /></svg></button>
      <svg width="12" height="12" className="mr-px mt-1" aria-hidden="true"><path d="M9 0h2v2H9zM5 4h2v2H5zM9 4h2v2H9zM1 8h2v2H1zM5 8h2v2H5zM9 8h2v2H9z" fill="#8790a5" /></svg>
    </div>
  </footer>
)

const MiniToolbar = () => (
  <div role="toolbar" aria-label="浮动工具栏" className="absolute left-[720px] top-[168px] flex h-[55px] w-[246px] flex-col rounded-[3px] border border-[#a7abb0] bg-white px-px pt-px shadow-[1px_1px_2px_rgba(0,0,0,0.25)]">
    <div className="flex h-[25px] items-center">
      <div className="flex h-[25px] w-[67px] items-center border border-[#d0d3d7] pr-1">
        <select aria-label="字体" className="w-0 flex-1 appearance-none bg-transparent pl-[1px] text-[12px] text-black outline-none"><option>宋体</option></select>
        <Caret />
      </div>
      <div className="flex h-[25px] w-[43px] items-center border border-l-0 border-[#d0d3d7] pr-1">
        <select aria-label="字号" className="w-0 flex-1 appearance-none bg-transparent pl-[3px] text-[12px] text-black outline-none"><option>18</option></select>
        <Caret />
      </div>
      <div className="flex flex-1 items-center justify-between pl-[4px] pr-[4px]">
        <button aria-label="增大字号"><Icon><text x="0" y="14" fontSize="15" fontWeight="700" fill="#222" fontFamily="Liberation Serif">A</text><path d="M10.500 4l2.500-3 2.500 3z" fill="#2a5cae" /></Icon></button>
        <button aria-label="减小字号"><Icon><text x="2" y="14" fontSize="11" fontWeight="700" fill="#222" fontFamily="Liberation Serif">A</text><path d="M10.500 2l2.500 3 2.500-3z" fill="#2a5cae" /></Icon></button>
        <button aria-label="减少缩进"><Indent /></button>
        <button aria-label="增加缩进"><Indent right /></button>
        <button aria-label="上移一层"><BringForward /></button>
        <button aria-label="下移一层"><SendBackward /></button>
      </div>
    </div>
    <div className="flex flex-1 items-center pl-px pt-px text-black">
      <button aria-label="加粗" className="w-[16px] font-['Liberation_Serif',serif] text-[14px] font-bold">B</button>
      <button aria-label="倾斜" className="ml-[6px] w-[16px] font-['Liberation_Serif',serif] text-[14px] font-bold italic">I</button>
      <button aria-label="左对齐" className="ml-[4px] flex h-[22px] w-[22px] items-center justify-center rounded-[2px] border border-[#c9963a] bg-[#fcd568]"><Lines align="left" /></button>
      <button aria-label="居中" className="ml-[4px]"><Lines align="center" /></button>
      <button aria-label="右对齐" className="ml-[6px]"><Lines align="right" /></button>
      <button aria-label="字体颜色" className="ml-[6px] flex items-center gap-[6px]"><LetterA bar="#f00" /><Caret /></button>
      <button aria-label="形状填充" className="ml-[6px] flex items-center gap-[6px]"><Bucket /><Caret /></button>
      <button aria-label="形状轮廓" className="ml-[6px] flex items-center gap-[6px]"><PenOutline /><Caret /></button>
      <button aria-label="格式刷" className="ml-[6px]">
        <Icon><path d="M1 9l5-3 4 4-3 5.500C4 14 3 12 1 9z" fill="#f4dc7a" stroke="#a88a2a" /><path d="M6 6l2-2 4 4-2 2z" fill="#d8d8d8" stroke="#555" strokeWidth=".7" /><path d="M9.500 5l4-4.500 2 2L11.500 7z" fill="#4a4e9f" /></Icon>
      </button>
    </div>
  </div>
)

type MenuEntry = {
  text: string
  hotkey: string
  icon?: ReactNode
  more?: boolean
  disabled?: boolean
  submenu?: 'plain' | 'split'
}

const menu: (MenuEntry | 'separator' | 'paste')[] = [
  { text: '剪切', hotkey: 'T', icon: <Cut /> },
  { text: '复制', hotkey: 'C', icon: <Copy /> },
  'paste',
  'separator',
  { text: '编辑文字', hotkey: 'X', icon: <TextBox /> },
  { text: '编辑顶点', hotkey: 'E', icon: <EditPoints /> },
  'separator',
  { text: '组合', hotkey: 'G', icon: <GroupIcon />, disabled: true, submenu: 'plain' },
  { text: '置于顶层', hotkey: 'R', icon: <ToFront />, submenu: 'split' },
  { text: '置于底层', hotkey: 'K', icon: <ToBack />, submenu: 'split' },
  'separator',
  { text: '编辑超链接', hotkey: 'H', icon: <GlobeLink />, more: true },
  { text: '打开超链接', hotkey: 'L', disabled: true },
  { text: '复制超链接', hotkey: 'C', disabled: true },
  { text: '取消超链接', hotkey: 'M', icon: <RemoveLink /> },
  'separator',
  { text: '另存为图片', hotkey: 'S', more: true },
  'separator',
  { text: '设置为默认文本框', hotkey: 'D' },
  { text: '大小和位置', hotkey: 'Z', icon: <HeightIcon />, more: true },
  { text: '设置形状格式', hotkey: 'O', icon: <FormatShape />, more: true },
]

const Gutter = ({ children }: { children?: ReactNode }) => (
  <span className="flex w-[26px] shrink-0 items-center justify-center self-stretch border-r border-[#e2e4e7]">{children}</span>
)

const ContextMenu = () => (
  <ul className="absolute left-[719px] top-[238px] w-[173px] border border-[#a7abb0] bg-white py-px text-[#3b3b3b] shadow-[1px_1px_2px_rgba(0,0,0,0.25)]">
    {menu.map((entry, i) => {
      if (entry === 'separator') {
        return (
          <li key={i} className="flex h-[4px]">
            <Gutter />
            <span className="ml-[7px] mt-px h-px flex-1 border-t border-dashed border-[#c5c8cc]" />
          </li>
        )
      }
      if (entry === 'paste') {
        return (
          <li key={i}>
            <div className="flex h-[22px]">
              <Gutter><Paste /></Gutter>
              <b className="flex flex-1 items-center bg-[#eff1f5] pl-[8px]">粘贴选项:</b>
            </div>
            <div className="flex h-[30px]">
              <Gutter />
              <button aria-label="使用目标主题" className="ml-[4px]"><PasteBlock /></button>
              <button aria-label="图片" className="ml-[7px]"><PasteBlock picture /></button>
            </div>
          </li>
        )
      }
      return (
        <li key={i}>
          <button disabled={entry.disabled} className={clsx('flex h-[25px] w-full items-center text-left', entry.disabled && 'text-[#a3a6aa]')}>
            <Gutter>{entry.icon}</Gutter>
            <span className="flex-1 whitespace-nowrap pl-[8px]">
              {entry.text}(<u>{entry.hotkey}</u>){entry.more && '...'}
            </span>
            {entry.submenu === 'split' && <span className="mr-[9px] h-[17px] w-px bg-[#8c939b]" />}
            {entry.submenu && <svg width="5" height="8" className="mr-[9px]"><path d="M0 0v8l5-4z" fill={entry.disabled ? '#a9a9a9' : '#777'} /></svg>}
          </button>
        </li>
      )
    })}
  </ul>
)

export default function App() {
  return (
    <div className="h-screen bg-white font-['Noto_Sans','Noto_Sans_CJK_SC',sans-serif] text-[12px] leading-4">
      <div className="relative flex h-full flex-col overflow-hidden rounded-t-[7px] rounded-b-[5px] border border-[#5d6572] bg-linear-to-b from-[#eceef1] via-[#e9ecf0] to-[#eceef1] px-[7px] pb-[7px]">
        <Header />
        <Ribbon />
        <div className="h-[4px] shrink-0 border-t border-[#8f8f8f] bg-linear-to-b from-[#d8ac58] to-[#b9a78a]" />
        <div className="flex min-h-0 flex-1">
          <SlidePanel />
          <Workspace />
          <AnimationPane />
        </div>
        <StatusBar />
      </div>
      <MiniToolbar />
      <ContextMenu />
      <div className="absolute left-[746px] top-[474px] h-[33px] w-[143px] border-[3px] border-[#f93a37]" />
      <div className="absolute left-[747px] top-[551px] h-[28px] w-[139px] border-[3px] border-[#f93a37]" />
      <p className="pointer-events-none absolute bottom-[5px] right-[13px] whitespace-nowrap font-['Noto_Sans_CJK_SC',sans-serif] text-[20px] leading-7 font-light text-[#e4e5e8] [text-shadow:1px_1px_1px_#5c6068]">CSDN @爱睡觉的小罄</p>
    </div>
  )
}
